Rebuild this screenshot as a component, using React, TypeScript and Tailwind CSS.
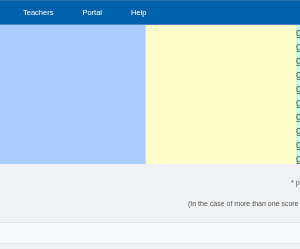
import React from "react";

export default function App() {
  const rows = Array.from({ length: 10 });
  return (
    <div className="w-[300px] h-[249px] overflow-hidden bg-[#f0f1f3] flex flex-col antialiased will-change-transform" style={{ fontFamily: '"Liberation Sans", Arial, sans-serif' }}>
      <nav className="h-[25px] shrink-0 bg-[#0062ad] border-t border-t-[#2c6fae] border-b border-b-[#4d86bd] flex items-center text-white text-[7.5px]">
        <span className="ml-[23px]">Teachers</span>
        <span className="ml-[29px]">Portal</span>
        <span className="ml-[29px]">Help</span>
      </nav>
      <div className="flex h-[139px] shrink-0">
        <div className="w-[146px] bg-[#aaccff] border-r border-r-[#c4dcff]" />
        <div className="flex-1 bg-[#ffffcc] relative">
          <span className="absolute left-[83px] top-[31px] w-[1px] h-[1px] bg-[#e8e8c0]" />
        </div>
        <div className="w-[4px] bg-[#ccffdd] overflow-hidden flex flex-col pt-[1px]">
          {rows.map((_, i) => (
            <div key={i} className="h-[14px] text-[10px] leading-[14px] text-[#3a4f4a] whitespace-nowrap">
              grade
            </div>
          ))}
        </div>
      </div>
      <div className="h-[58px] shrink-0 bg-[#f0f1f3] flex flex-col text-[7px] text-[#555555] whitespace-nowrap overflow-hidden">
        <div className="mt-[14px] pl-[291px]">* please</div>
        <div className="mt-[10px] pl-[188px]">(In the case of more than one score per student)</div>
      </div>
      <div className="h-[22px] shrink-0 bg-[#f9fafb] border-t border-t-[#e3e4e6] border-b border-b-[#e3e4e6]" />
      <div className="flex-1 bg-[#eff0f2]" />
    </div>
  );
}
